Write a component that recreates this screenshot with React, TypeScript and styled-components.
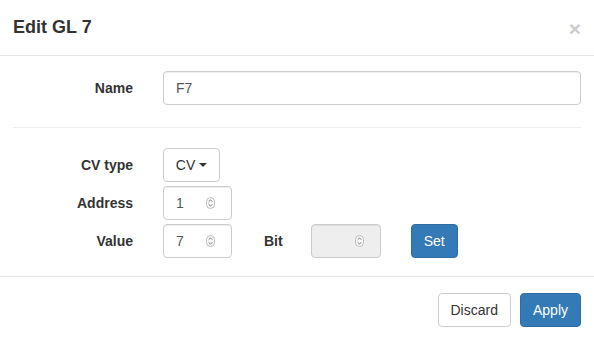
import React from "react";
import styled, { createGlobalStyle } from "styled-components";

const GlobalStyle = createGlobalStyle`
  body {
    margin: 0;
    font-family: "Liberation Sans", Helvetica, Arial, sans-serif;
    font-size: 14px;
    color: #333;
    background: #fff;
  }
  * { box-sizing: border-box; }
`;

const Modal = styled.div`
  width: 594px;
  height: 341px;
  background: #fff;
  display: flex;
  flex-direction: column;
`;

const Header = styled.div`
  display: flex;
  align-items: center;
  justify-content: space-between;
  padding: 15px 13px 15px 13px;
  border-bottom: 1px solid #e5e5e5;
`;

const Title = styled.h4`
  margin: 0;
  font-size: 18px;
  line-height: 25px;
  font-weight: 700;
  color: #333;
`;

const Close = styled.button`
  border: 0;
  background: transparent;
  padding: 0;
  margin-top: 1px;
  font-family: inherit;
  font-size: 21px;
  font-weight: 700;
  line-height: 1;
  color: #000;
  opacity: 0.2;
  cursor: pointer;
`;

const Body = styled.div`
  padding: 15px 13px 18px 13px;
  border-bottom: 1px solid #e5e5e5;
`;

const FormRow = styled.div<{ $gap?: number }>`
  display: grid;
  grid-template-columns: 120px 1fr;
  column-gap: 30px;
  align-items: center;
  margin-top: ${(p) => p.$gap ?? 0}px;
`;

const Label = styled.label`
  font-weight: 700;
  text-align: right;
`;

const Inline = styled.div`
  display: flex;
  align-items: center;
`;

const InlineLabel = styled.label<{ $left: number; $right: number }>`
  font-weight: 700;
  margin-left: ${(p) => p.$left}px;
  margin-right: ${(p) => p.$right}px;
`;

const TextInput = styled.input`
  width: 100%;
  height: 34px;
  padding: 6px 12px;
  font-family: inherit;
  font-size: 14px;
  color: #555;
  border: 1px solid #ccc;
  border-radius: 4px;
  box-shadow: inset 0 1px 1px rgba(0, 0, 0, 0.075);
  outline: none;
`;

const Rule = styled.hr`
  margin: 22px 0 20px;
  border: 0;
  border-top: 1px solid #eee;
`;

const NumberBox = styled.div<{ $disabled?: boolean; $width: number }>`
  display: flex;
  align-items: center;
  width: ${(p) => p.$width}px;
  height: 34px;
  padding: 0 16px 0 12px;
  border: 1px solid #ccc;
  border-radius: 4px;
  background: ${(p) => (p.$disabled ? "#eee" : "#fff")};
  box-shadow: inset 0 1px 1px rgba(0, 0, 0, 0.075);
`;

const NumberText = styled.input`
  flex: 1;
  min-width: 0;
  border: 0;
  padding: 0;
  background: transparent;
  font-family: inherit;
  font-size: 14px;
  color: #555;
  outline: none;
`;

const Button = styled.button<{ $primary?: boolean; $width?: number }>`
  height: 34px;
  padding: 6px 12px;
  ${(p) => (p.$width ? `width: ${p.$width}px;` : "")}
  white-space: nowrap;
  font-family: inherit;
  font-size: 14px;
  line-height: 20px;
  border-radius: 4px;
  border: 1px solid ${(p) => (p.$primary ? "#2e6da4" : "#ccc")};
  background: ${(p) => (p.$primary ? "#337ab7" : "#fff")};
  color: ${(p) => (p.$primary ? "#fff" : "#333")};
  cursor: pointer;
`;

const DropButton = styled(Button)`
  padding: 6px 0;
  display: flex;
  align-items: center;
  justify-content: center;
`;

const Caret = styled.span`
  display: inline-block;
  width: 0;
  height: 0;
  margin-left: 4px;
  border-top: 4px solid #333;
  border-left: 4px solid transparent;
  border-right: 4px solid transparent;
`;

const Footer = styled.div`
  display: flex;
  justify-content: flex-end;
  gap: 9px;
  padding: 16px 13px 14px;
`;

const Spinner = () => (
  <svg width="9" height="12" viewBox="0 0 9 12">
    <rect x="0.5" y="0.5" width="8" height="11" rx="4" fill="#f8f8f8" stroke="#bdbdbd" />
    <path d="M2.7 4.7 L4.5 2.9 L6.3 4.7" fill="none" stroke="#666" strokeWidth="0.9" />
    <path d="M2.7 7.3 L4.5 9.1 L6.3 7.3" fill="none" stroke="#666" strokeWidth="0.9" />
  </svg>
);

const NumberField = ({ value, width, disabled }: { value: string; width: number; disabled?: boolean }) => (
  <NumberBox $width={width} $disabled={disabled}>
    <NumberText value={value} disabled={disabled} readOnly />
    <Spinner />
  </NumberBox>
);

export default function App() {
  return (
    <Modal>
      <GlobalStyle />
      <Header>
        <Title>Edit GL 7</Title>
        <Close aria-label="Close">×</Close>
      </Header>
      <Body>
        <FormRow>
          <Label>Name</Label>
          <TextInput defaultValue="F7" />
        </FormRow>
        <Rule />
        <FormRow>
          <Label>CV type</Label>
          <Inline>
            <DropButton $width={57}>
              CV<Caret />
            </DropButton>
          </Inline>
        </FormRow>
        <FormRow $gap={4}>
          <Label>Address</Label>
          <Inline>
            <NumberField value="1" width={69} />
          </Inline>
        </FormRow>
        <FormRow $gap={4}>
          <Label>Value</Label>
          <Inline>
            <NumberField value="7" width={69} />
            <InlineLabel $left={32} $right={28}>Bit</InlineLabel>
            <NumberField value="" width={70} disabled />
            <Button $primary $width={47} style={{ marginLeft: 30 }}>
              Set
            </Button>
          </Inline>
        </FormRow>
      </Body>
      <Footer>
        <Button>Discard</Button>
        <Button $primary>Apply</Button>
      </Footer>
    </Modal>
  );
}
